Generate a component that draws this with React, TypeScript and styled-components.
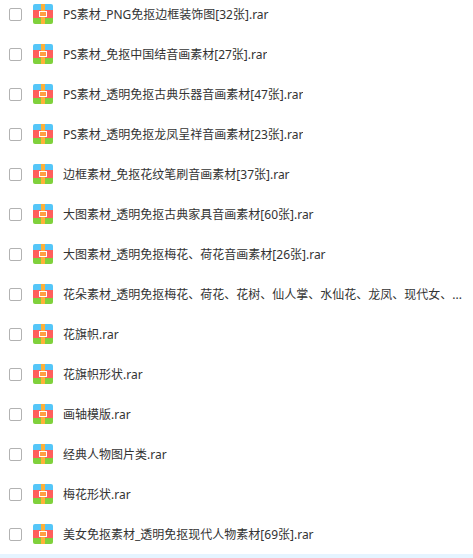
import React, { useState } from "react";
import styled, { createGlobalStyle } from "styled-components";

const GlobalStyle = createGlobalStyle`
  body {
    margin: 0;
    background: #ffffff;
    overflow-x: hidden;
  }
`;

const FileList = styled.ul`
  display: grid;
  gap: 12px;
  margin: 0;
  padding: 0;
  list-style: none;
  font-family: "Noto Sans", "Noto Sans CJK SC", sans-serif;
  font-size: 12px;
  line-height: 20px;
  color: #333333;
`;

const FileRow = styled.li`
  padding: 0 8px 0 9px;
`;

const FileLabel = styled.label`
  display: flex;
  align-items: center;
  height: 28px;
`;

const Checkbox = styled.input`
  appearance: none;
  flex: none;
  width: 13px;
  height: 13px;
  margin: 0 11px 0 0;
  border: 1px solid #b2b2b2;
  border-radius: 2px;
  background: #ffffff;

  &:checked {
    border-color: #3b8cff;
    background: #3b8cff;
  }
`;

const ArchiveIcon = styled.svg`
  flex: none;
  width: 20px;
  height: 20px;
  margin-right: 10px;
  border-radius: 2px;
`;

const FileName = styled.span`
  min-width: 0;
  padding-top: 2px;
  overflow: hidden;
  text-overflow: ellipsis;
  white-space: nowrap;
`;

const ActiveBand = styled.div`
  height: 4px;
  margin-top: 6px;
  background: #e5f4ff;
`;

const files = [
  "PS素材_PNG免抠边框装饰图[32张].rar",
  "PS素材_免抠中国结音画素材[27张].rar",
  "PS素材_透明免抠古典乐器音画素材[47张].rar",
  "PS素材_透明免抠龙凤呈祥音画素材[23张].rar",
  "边框素材_免抠花纹笔刷音画素材[37张].rar",
  "大图素材_透明免抠古典家具音画素材[60张].rar",
  "大图素材_透明免抠梅花、荷花音画素材[26张].rar",
  "花朵素材_透明免抠梅花、荷花、花树、仙人掌、水仙花、龙凤、现代女、...",
  "花旗帜.rar",
  "花旗帜形状.rar",
  "画轴模版.rar",
  "经典人物图片类.rar",
  "梅花形状.rar",
  "美女免抠素材_透明免抠现代人物素材[69张].rar",
];

function RarIcon() {
  return (
    <ArchiveIcon viewBox="0 0 20 20" aria-hidden="true">
      <rect width="20" height="6" fill="#55c6f8" />
      <rect y="6" width="20" height="8" fill="#ff5f5c" />
      <rect y="14" width="20" height="6" fill="#7fd13b" />
      <rect x="8" width="4" height="20" fill="#ffb038" />
      <rect x="6.5" y="7.5" width="7" height="5" fill="#ff9f43" stroke="#ffffff" />
    </ArchiveIcon>
  );
}

export default function App() {
  const [selected, setSelected] = useState<string[]>([]);

  const toggle = (name: string) =>
    setSelected((current) =>
      current.includes(name)
        ? current.filter((item) => item !== name)
        : [...current, name]
    );

  return (
    <main>
      <GlobalStyle />
      <FileList>
        {files.map((name) => (
          <FileRow key={name}>
            <FileLabel>
              <Checkbox
                type="checkbox"
                checked={selected.includes(name)}
                onChange={() => toggle(name)}
              />
              <RarIcon />
              <FileName>{name}</FileName>
            </FileLabel>
          </FileRow>
        ))}
      </FileList>
      <ActiveBand />
    </main>
  );
}
